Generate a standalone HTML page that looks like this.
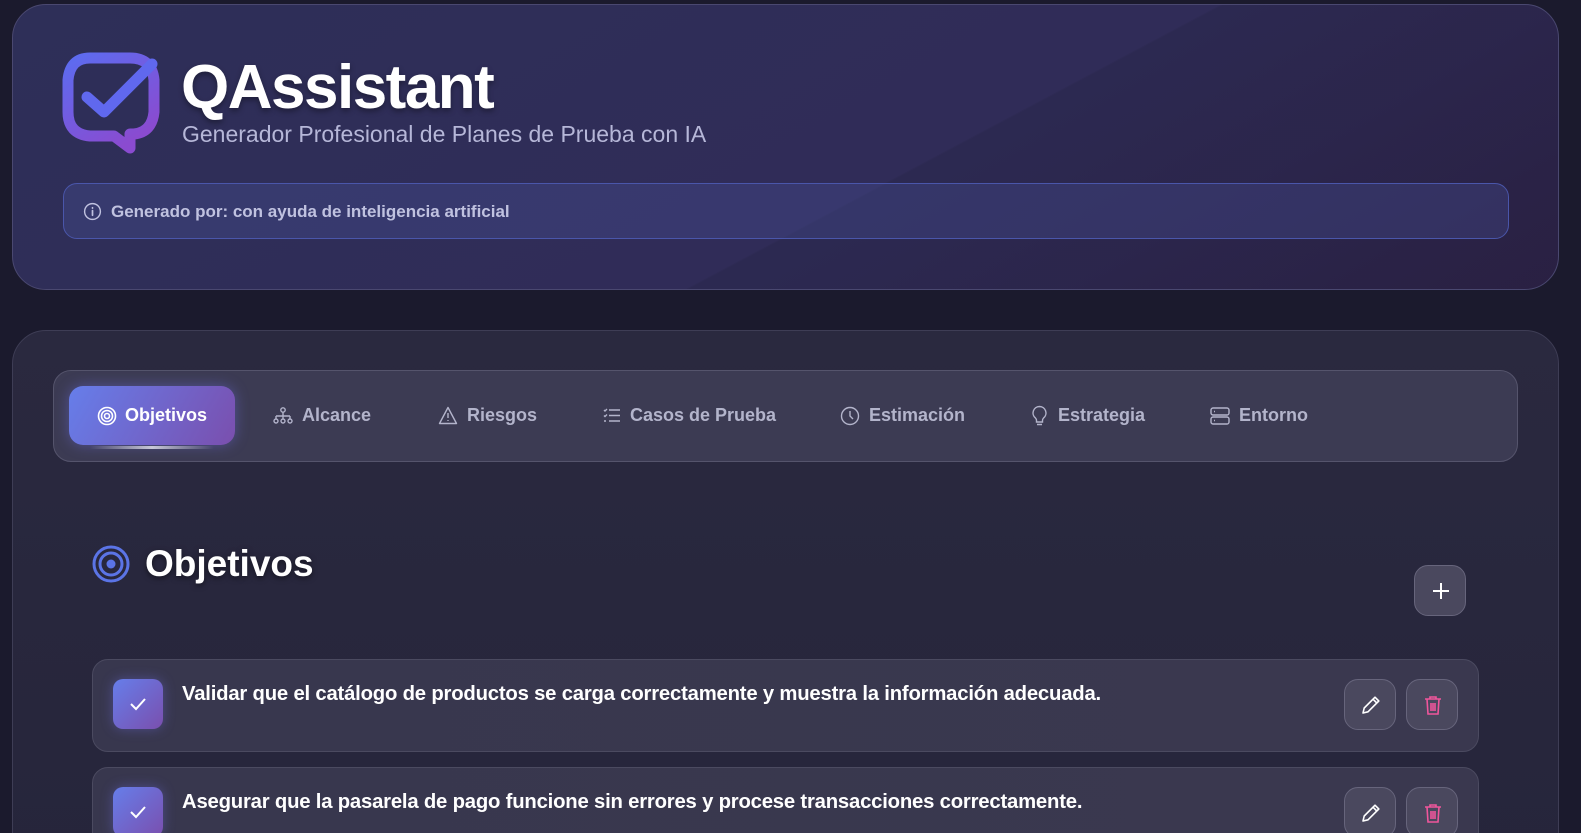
<!DOCTYPE html>
<html style="width:1581px;height:833px;overflow:hidden"><head><meta charset="utf-8"><style>
*{margin:0;padding:0;box-sizing:border-box}
body{width:1581px;height:833px;overflow:hidden;background:#1b1a2d;font-family:"Liberation Sans",sans-serif;position:relative}
.abs{position:absolute}
.hdr{left:12px;top:4px;width:1547px;height:286px;border-radius:34px;border:1px solid #4a4870;
background:linear-gradient(150deg,#2e2f58 0%,#302c58 60%,#2d2348 100%);overflow:hidden}
.hdr:after{content:"";position:absolute;left:0;top:0;right:0;bottom:0;background:linear-gradient(152deg,rgba(255,255,255,0.0) 58%,rgba(0,0,0,0.08) 58.2%)}
.title{left:181px;top:52px;font-size:62px;font-weight:900;color:#fff;letter-spacing:-1.5px;text-shadow:0 3px 6px rgba(0,0,0,.35)}
.sub{left:182px;top:121px;font-size:23px;color:#b6b7d8}
.info{left:63px;top:183px;width:1446px;height:56px;border-radius:14px;border:1px solid #4a56aa;background:rgba(80,90,170,0.28);z-index:2}
.info span{position:absolute;left:47px;top:18px;font-size:17px;color:#c0c2e0;font-weight:600}
.main{left:12px;top:330px;width:1547px;height:540px;border-radius:34px;border:1px solid #3e3d55;background:linear-gradient(180deg,#2a293f,#26253b)}
.tabs{left:53px;top:370px;width:1465px;height:92px;border-radius:18px;border:1px solid #55546c;background:#3c3b53}
.act{left:69px;top:386px;width:166px;height:59px;border-radius:14px;background:linear-gradient(120deg,#667eea,#7a4fae);box-shadow:0 0 14px rgba(110,110,230,.45)}
.ul{left:90px;top:446px;width:124px;height:3px;border-radius:2px;background:linear-gradient(90deg,transparent,#c8c8d8,transparent)}
.tl{top:405px;font-size:18px;font-weight:700;color:#b3b4cb}
.h2{left:145px;top:543px;font-size:37px;font-weight:700;color:#fff;text-shadow:0 2px 6px rgba(0,0,0,.5)}
.btn{width:52px;height:51px;border-radius:14px;background:#4a485e;border:1px solid #67657c}
.card{left:92px;width:1387px;height:93px;border-radius:16px;border:1px solid #4b4a60;background:linear-gradient(90deg,#38374e,#3a384f)}
.chk{width:50px;height:50px;border-radius:10px;background:linear-gradient(135deg,#667eea,#7a4fae);box-shadow:0 0 12px rgba(110,110,230,.4)}
.ct{left:182px;font-size:20.3px;font-weight:700;color:#fff;letter-spacing:-0.2px}
</style></head><body>
<div class="abs hdr"></div>
<svg class="abs" style="left:62px;top:52px" width="100" height="102" viewBox="0 0 100 102">
<defs><linearGradient id="lg" x1="0" y1="0" x2="0.6" y2="1"><stop offset="0" stop-color="#5c6cf0"/><stop offset="1" stop-color="#8a4bd0"/></linearGradient></defs>
<path d="M28 6 H68 Q90 6 92 28 V60 Q90 80 72 82 L68 82 L68 96 L52 84 L28 84 Q6 82 6 60 V28 Q8 6 28 6 Z" fill="none" stroke="url(#lg)" stroke-width="11" stroke-linejoin="round"/>
<path d="M25 45 L42 60 L90 12" fill="none" stroke="#6068ee" stroke-width="11" stroke-linecap="round" stroke-linejoin="round"/>
</svg>
<div class="abs title">QAssistant</div>
<div class="abs sub">Generador Profesional de Planes de Prueba con IA</div>
<div class="abs info">
<svg class="abs" style="left:19px;top:18px" width="19" height="19" viewBox="0 0 20 20"><circle cx="10" cy="10" r="8.3" fill="none" stroke="#c0c2e0" stroke-width="1.5"/><path d="M10 9v5M10 6v.5" stroke="#c0c2e0" stroke-width="1.8" stroke-linecap="round"/></svg>
<span>Generado por: con ayuda de inteligencia artificial</span></div>
<div class="abs main"></div>
<div class="abs tabs"></div>
<div class="abs act"></div>
<div class="abs ul"></div>
<svg class="abs" style="left:97px;top:406px" width="20" height="20" viewBox="0 0 20 20" fill="none" stroke="#fff" stroke-width="1.6"><circle cx="10" cy="10" r="8.5"/><circle cx="10" cy="10" r="5.5"/><circle cx="10" cy="10" r="2.5"/></svg>
<div class="abs tl" style="left:125px;color:#fff">Objetivos</div>
<svg class="abs" style="left:273px;top:407px" width="20" height="18" viewBox="0 0 20 18" fill="none" stroke="#b3b4cb" stroke-width="1.4"><circle cx="10" cy="3" r="2.2"/><path d="M10 5v4M3 9h14M3 9v3M10 9v3M17 9v3"/><circle cx="3" cy="14" r="2"/><circle cx="10" cy="14" r="2"/><circle cx="17" cy="14" r="2"/></svg>
<div class="abs tl" style="left:302px">Alcance</div>
<svg class="abs" style="left:438px;top:406px" width="20" height="19" viewBox="0 0 20 19" fill="none" stroke="#b3b4cb" stroke-width="1.4"><path d="M10 1.5L18.5 17.5H1.5Z" stroke-linejoin="round"/><path d="M10 7v5M10 14v1"/></svg>
<div class="abs tl" style="left:467px">Riesgos</div>
<svg class="abs" style="left:603px;top:408px" width="18" height="15" viewBox="0 0 18 15" fill="none" stroke="#b3b4cb" stroke-width="1.4"><path d="M6 2h11M6 7.5h11M6 13h11M1 2l1 1 2-2M1 7.5l1 1 2-2M1 13h2"/></svg>
<div class="abs tl" style="left:630px">Casos de Prueba</div>
<svg class="abs" style="left:840px;top:406px" width="20" height="20" viewBox="0 0 20 20" fill="none" stroke="#b3b4cb" stroke-width="1.4"><circle cx="10" cy="10" r="8.5"/><path d="M10 5v5l3 3"/></svg>
<div class="abs tl" style="left:869px">Estimación</div>
<svg class="abs" style="left:1031px;top:405px" width="17" height="22" viewBox="0 0 17 22" fill="none" stroke="#b3b4cb" stroke-width="1.4"><path d="M8.5 1.5a6.5 6.5 0 0 0-4 11.6c.8.7 1 1.5 1 2.4v1.5h6v-1.5c0-.9.2-1.7 1-2.4a6.5 6.5 0 0 0-4-11.6ZM6 19.5h5"/></svg>
<div class="abs tl" style="left:1058px">Estrategia</div>
<svg class="abs" style="left:1210px;top:407px" width="20" height="18" viewBox="0 0 20 18" fill="none" stroke="#b3b4cb" stroke-width="1.4"><rect x="1" y="1" width="18" height="7" rx="2"/><rect x="1" y="10" width="18" height="7" rx="2"/><path d="M4 4.5h1M4 13.5h1"/></svg>
<div class="abs tl" style="left:1239px">Entorno</div>
<svg class="abs" style="left:92px;top:545px" width="38" height="38" viewBox="0 0 38 38" fill="none" stroke="#5b74e6" stroke-width="3"><circle cx="19" cy="19" r="17"/><circle cx="19" cy="19" r="11"/><circle cx="19" cy="19" r="4.5" fill="#5b74e6" stroke="none"/></svg>
<div class="abs h2">Objetivos</div>
<div class="abs btn" style="left:1414px;top:565px"><svg class="abs" style="left:16px;top:15px" width="20" height="20" viewBox="0 0 20 20" stroke="#fff" stroke-width="2"><path d="M10 2v16M2 10h16"/></svg></div>
<div class="abs card" style="top:659px"></div>
<div class="abs chk" style="left:113px;top:679px"><svg class="abs" style="left:16px;top:17px" width="18" height="16" viewBox="0 0 18 16" fill="none" stroke="#fff" stroke-width="2"><path d="M2 8l5 5 9-10"/></svg></div>
<div class="abs ct" style="top:683px">Validar que el catálogo de productos se carga correctamente y muestra la información adecuada.</div>
<div class="abs btn" style="left:1344px;top:679px"><svg class="abs" style="left:15px;top:14px" width="22" height="22" viewBox="0 0 22 22" fill="none" stroke="#fff" stroke-width="1.6" stroke-linejoin="round"><path d="M3 19l1.2-5L15 3.2l3.8 3.8L8 17.8Z M13 5.2l3.8 3.8"/></svg></div>
<div class="abs btn" style="left:1406px;top:679px"><svg class="abs" style="left:16px;top:15px" width="20" height="21" viewBox="0 0 20 21" fill="none" stroke="#f0569c" stroke-width="1.6"><path d="M2 4h16M7 4V2h6v2M4 4l1 15h10l1-15M8 8v8M10 8v8M12 8v8"/></svg></div>
<div class="abs card" style="top:767px"></div>
<div class="abs chk" style="left:113px;top:787px"><svg class="abs" style="left:16px;top:17px" width="18" height="16" viewBox="0 0 18 16" fill="none" stroke="#fff" stroke-width="2"><path d="M2 8l5 5 9-10"/></svg></div>
<div class="abs ct" style="top:791px">Asegurar que la pasarela de pago funcione sin errores y procese transacciones correctamente.</div>
<div class="abs btn" style="left:1344px;top:787px"><svg class="abs" style="left:15px;top:14px" width="22" height="22" viewBox="0 0 22 22" fill="none" stroke="#fff" stroke-width="1.6" stroke-linejoin="round"><path d="M3 19l1.2-5L15 3.2l3.8 3.8L8 17.8Z M13 5.2l3.8 3.8"/></svg></div>
<div class="abs btn" style="left:1406px;top:787px"><svg class="abs" style="left:16px;top:15px" width="20" height="21" viewBox="0 0 20 21" fill="none" stroke="#f0569c" stroke-width="1.6"><path d="M2 4h16M7 4V2h6v2M4 4l1 15h10l1-15M8 8v8M10 8v8M12 8v8"/></svg></div>
</body></html>
